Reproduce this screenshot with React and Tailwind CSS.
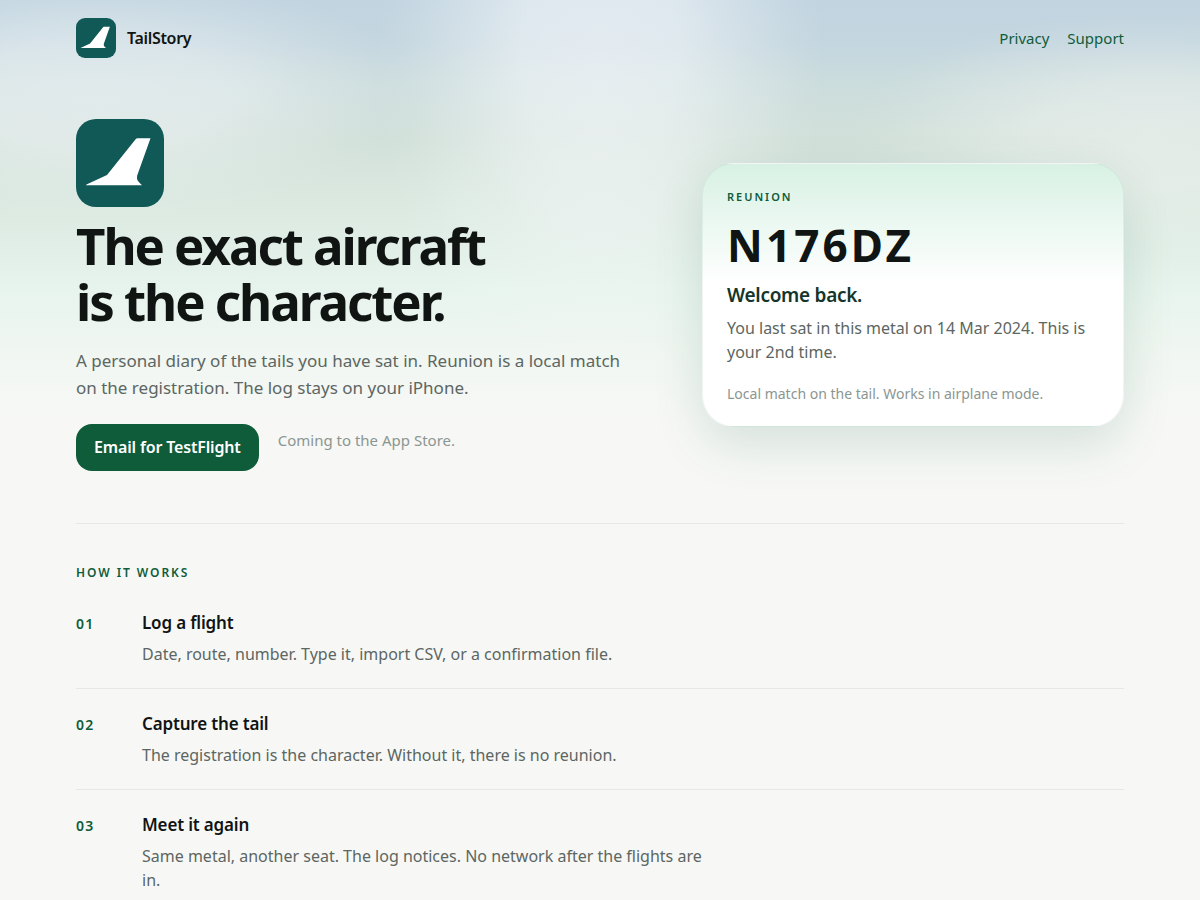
const steps = [
  {
    number: "01",
    title: "Log a flight",
    text: "Date, route, number. Type it, import CSV, or a confirmation file.",
  },
  {
    number: "02",
    title: "Capture the tail",
    text: "The registration is the character. Without it, there is no reunion.",
  },
  {
    number: "03",
    title: "Meet it again",
    text: "Same metal, another seat. The log notices. No network after the flights are in.",
  },
];

function TailMark({ className }) {
  return (
    <svg viewBox="0 0 88 88" className={className} aria-hidden="true">
      <rect width="88" height="88" rx="20" fill="#105956" />
      <path
        d="M60 19.8 Q60.5 19.2 61.5 19.2 H74.5 L61.2 56.5 Q60.2 60.5 63 63.2 L66 66.2 H10 Q9.5 66 11 65.2 L31 56 Z"
        fill="#fff"
      />
    </svg>
  );
}

function Header() {
  return (
    <header className="flex items-center justify-between py-[18px]">
      <a
        href="#top"
        className="flex items-center gap-[11px] leading-[23px] font-semibold tracking-[-0.02em] text-[#101413]"
      >
        <TailMark className="size-10" />
        TailStory
      </a>
      <nav className="flex gap-[18px] text-[15px] leading-[22px] text-[#0f5c3a]">
        <a href="#privacy">Privacy</a>
        <a href="#support">Support</a>
      </nav>
    </header>
  );
}

function ReunionCard() {
  return (
    <article className="rounded-[32px] border border-[#0f5c3a]/6 bg-[linear-gradient(180deg,#d8f1e4_0%,#ffffff_46%)] px-6 pt-[22px] pb-5 shadow-[0_18px_50px_rgba(15,92,58,0.14)]">
      <p className="text-[11px] leading-[22px] font-semibold tracking-[0.18em] text-[#0f5c3a]">REUNION</p>
      <p className="mt-[7px] text-[44px] leading-[60px] font-bold tracking-[0.07em] text-[#101413]">N176DZ</p>
      <h2 className="mt-[5px] text-[19px] leading-[30px] font-semibold tracking-[-0.015em] text-[#14352a]">
        Welcome back.
      </h2>
      <p className="mt-[6px] leading-6 text-[#5c6662]">
        You last sat in this metal on 14 Mar 2024. This is your 2nd time.
      </p>
      <p className="mt-[18px] text-[14px] leading-6 text-[#8b9691]">
        Local match on the tail. Works in airplane mode.
      </p>
    </article>
  );
}

function Hero() {
  return (
    <section className="grid items-center gap-10 border-b border-[#e6e8e6] pt-[43px] pb-[52px] md:grid-cols-[1.25fr_0.9fr]">
      <div>
        <TailMark className="size-22" />
        <h1 className="mt-[10px] text-[51px] leading-[56px] font-bold tracking-[-0.04em] text-[#101413]">
          The exact aircraft
          <br />
          is the character.
        </h1>
        <p className="mt-[18px] max-w-[560px] text-[17px] leading-[27px] text-[#5c6662]">
          A personal diary of the tails you have sat in. Reunion is a local match on the registration. The log stays
          on your iPhone.
        </p>
        <div className="mt-[23px] flex flex-wrap items-start gap-[19px]">
          <a
            href="mailto:hello@tailstory.app"
            className="rounded-2xl bg-[#0f5c3a] px-[18px] py-[11px] leading-[25px] font-semibold tracking-[-0.01em] text-white"
          >
            Email for TestFlight
          </a>
          <p className="pt-1 text-[15px] leading-6 text-[#8b9691]">Coming to the App Store.</p>
        </div>
      </div>
      <ReunionCard />
    </section>
  );
}

function HowItWorks() {
  return (
    <section className="pt-[39px]">
      <h2 className="text-[12px] leading-[19px] font-semibold tracking-[0.16em] text-[#0f5c3a]">HOW IT WORKS</h2>
      <ol className="mt-[6px] divide-y divide-[#e6e8e6]">
        {steps.map((step) => (
          <li key={step.number} className="grid grid-cols-[48px_1fr] gap-[18px] py-[22px]">
            <span className="pt-[2px] text-[14px] leading-6 font-semibold tracking-[0.08em] text-[#0f5c3a]">
              {step.number}
            </span>
            <div>
              <h3 className="text-[17px] leading-[25px] font-semibold tracking-[-0.01em] text-[#101413]">
                {step.title}
              </h3>
              <p className="mt-[7px] max-w-xl leading-6 text-[#5c6662]">{step.text}</p>
            </div>
          </li>
        ))}
      </ol>
    </section>
  );
}

export default function App() {
  return (
    <div
      id="top"
      className="min-h-screen bg-[#f7f8f6] bg-[radial-gradient(ellipse_225px_330px_at_50%_60px,rgba(248,249,253,0.6)_0%,rgba(247,249,251,0.54)_35%,rgba(246,248,250,0.27)_65%,rgba(246,248,250,0.07)_88%,transparent_100%),radial-gradient(ellipse_330px_125px_at_8%_95px,rgba(240,244,246,0.58)_0%,rgba(240,244,246,0.5)_40%,rgba(240,244,246,0.22)_70%,rgba(240,244,246,0.05)_90%,transparent_100%),radial-gradient(ellipse_310px_125px_at_96%_135px,rgba(241,244,241,0.58)_0%,rgba(241,244,241,0.46)_40%,rgba(241,244,241,0.2)_70%,rgba(241,244,241,0.04)_90%,transparent_100%),linear-gradient(180deg,#c1d4e0_0px,#c4d6df_45px,#cbdcdd_80px,#d1e0d9_140px,#dae8e0_195px,#e7f4ed_290px,#f0f6f1_350px,#f7f8f6_420px)] font-['Noto_Sans',sans-serif] text-base"
    >
      <div className="mx-auto max-w-[1120px] px-9">
        <Header />
        <main>
          <Hero />
          <HowItWorks />
        </main>
      </div>
    </div>
  );
}
